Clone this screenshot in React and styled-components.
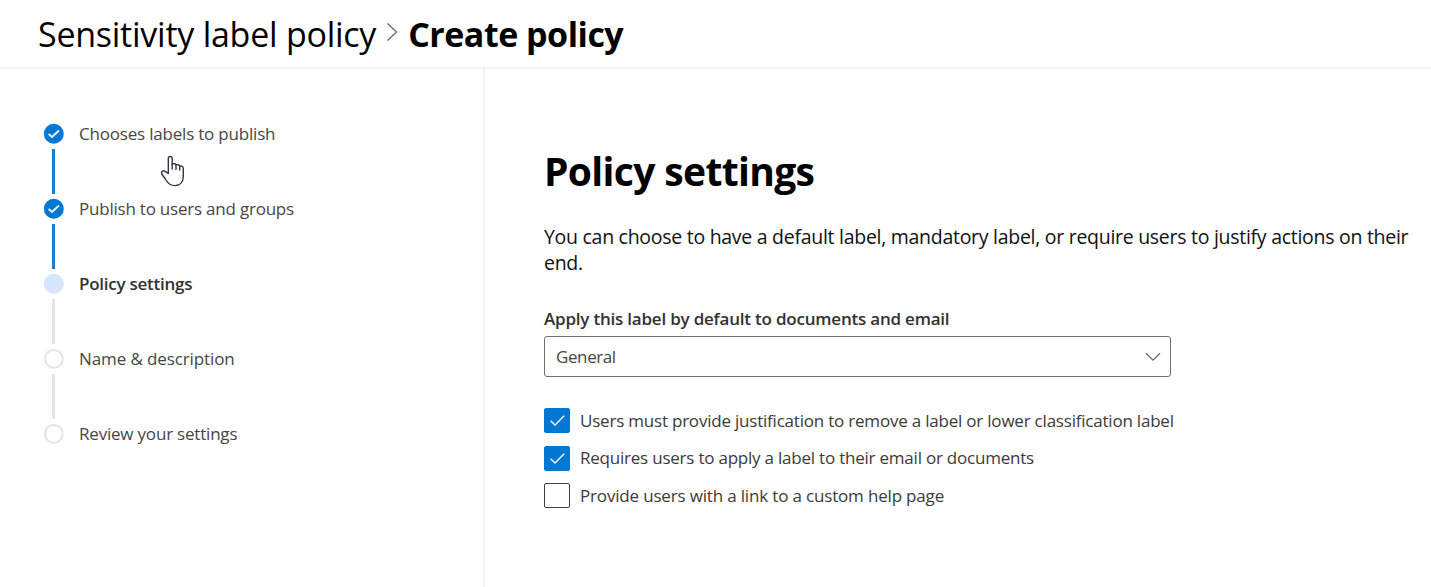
import React from "react";
import styled, { createGlobalStyle } from "styled-components";

const GlobalStyle = createGlobalStyle`
  * { box-sizing: border-box; }
  body {
    margin: 0;
    background: #fff;
    color: #000;
    font-family: "Segoe UI", "Open Sans", "Noto Sans", sans-serif;
    overflow: hidden;
  }
`;

const Page = styled.div`
  display: flex;
  flex-direction: column;
  width: 1431px;
  height: 587px;
  background: #fff;
`;

const Header = styled.header`
  display: flex;
  align-items: center;
  height: 69px;
  flex: none;
  padding-left: 38px;
  border-bottom: 2px solid #f3f3f3;
`;

const Crumb = styled.span`
  font-size: 34px;
  line-height: 46px;
  white-space: nowrap;
  font-weight: ${(p) => (p.$current ? 700 : 400)};
  letter-spacing: ${(p) => p.$track || 0}px;
`;

const CrumbArrow = styled.svg`
  flex: none;
  width: 12px;
  height: 20px;
  margin: 0 10px 4px;
`;

const Body = styled.div`
  display: flex;
  flex: 1;
  min-height: 0;
`;

const Sidebar = styled.nav`
  position: relative;
  flex: none;
  width: 485px;
  padding: 54px 0 0 43px;
  border-right: 2px solid #f3f3f3;
`;

const Steps = styled.ol`
  list-style: none;
  margin: 0;
  padding: 0;
`;

const Step = styled.li`
  display: flex;
  align-items: flex-start;
  height: 75px;
`;

const Rail = styled.div`
  display: flex;
  flex-direction: column;
  align-items: flex-start;
  gap: 4px;
  width: 22px;
`;

const Marker = styled.svg`
  width: 22px;
  height: 22px;
  flex: none;
`;

const Connector = styled.div`
  width: 3px;
  height: 45px;
  margin-left: 9px;
  background: ${(p) => (p.$done ? "#1480d8" : "#e6e3e6")};
`;

const StepLabel = styled.span`
  margin-left: 14px;
  font-size: 17px;
  line-height: 22px;
  white-space: nowrap;
  color: ${(p) => (p.$current ? "#323130" : "#484644")};
  font-weight: ${(p) => (p.$current ? 600 : 400)};
  letter-spacing: ${(p) => p.$track || 0}px;
`;

const Hand = styled.svg`
  position: absolute;
  left: 160px;
  top: 86px;
  width: 26px;
  height: 33px;
`;

const Main = styled.main`
  flex: 1;
  min-width: 0;
  padding: 74px 0 0 59px;
`;

const Title = styled.h1`
  margin: 0;
  font-size: 39px;
  line-height: 56px;
  font-weight: 700;
  white-space: nowrap;
  letter-spacing: ${(p) => p.$track || 0}px;
`;

const Intro = styled.p`
  margin: 25px 0 0;
  font-size: 19.5px;
  line-height: 26px;
  white-space: nowrap;
  color: #111;
  letter-spacing: ${(p) => p.$track || 0}px;
`;

const FieldLabel = styled.label`
  display: block;
  width: max-content;
  margin-top: 32px;
  font-size: 17px;
  line-height: 22px;
  font-weight: 600;
  color: #323130;
  white-space: nowrap;
  letter-spacing: ${(p) => p.$track || 0}px;
`;

const Select = styled.div`
  display: flex;
  align-items: center;
  justify-content: space-between;
  width: 627px;
  height: 41px;
  margin-top: 6px;
  padding: 0 9px 0 11px;
  border: 1.5px solid #706e6d;
  border-radius: 3px;
  color: #484644;
  font-size: 17px;
  line-height: 22px;
`;

const SelectValue = styled.span`
  letter-spacing: ${(p) => p.$track || 0}px;
`;

const Chevron = styled.svg`
  width: 16px;
  height: 10px;
`;

const Options = styled.div`
  display: flex;
  flex-direction: column;
  gap: 12.5px;
  margin-top: 31px;
`;

const Option = styled.div`
  display: flex;
  align-items: center;
  height: 25px;
`;

const Box = styled.span`
  display: flex;
  align-items: center;
  justify-content: center;
  flex: none;
  width: 26px;
  height: 25px;
  border-radius: 2px;
  border: 1.5px solid ${(p) => (p.$on ? "#0078d4" : "#403e3d")};
  background: ${(p) => (p.$on ? "#0078d4" : "#fff")};
`;

const OptionText = styled.span`
  margin-left: 10px;
  font-size: 17px;
  line-height: 22px;
  color: #3b3a39;
  white-space: nowrap;
  letter-spacing: ${(p) => p.$track || 0}px;
`;

const steps = [
  { text: "Chooses labels to publish", state: "done", track: -0.2 },
  { text: "Publish to users and groups", state: "done", track: -0.22 },
  { text: "Policy settings", state: "current", track: -0.25 },
  { text: "Name & description", state: "todo", track: -0.11 },
  { text: "Review your settings", state: "todo", track: -0.2 },
];

const options = [
  { text: "Users must provide justification to remove a label or lower classification label", on: true, track: -0.21 },
  { text: "Requires users to apply a label to their email or documents", on: true, track: -0.22 },
  { text: "Provide users with a link to a custom help page", on: false, track: -0.17 },
];

function StepMarker({ state }) {
  return (
    <Marker viewBox="0 0 22 22" fill="none">
      {state === "done" && (
        <>
          <circle cx="10.8" cy="10.8" r="10" fill="#0078d4" />
          <path d="M5.7 11 L9 14 L16 7.4" stroke="#e8f2fc" strokeWidth="2" />
        </>
      )}
      {state === "current" && <circle cx="10.8" cy="10.8" r="10" fill="#d6e6ff" />}
      {state === "todo" && <circle cx="10.8" cy="10.8" r="8.9" stroke="#e6e3e6" strokeWidth="2" />}
    </Marker>
  );
}

export default function App() {
  return (
    <Page>
      <GlobalStyle />
      <Header>
        <Crumb $track={-0.25}>Sensitivity label policy</Crumb>
        <CrumbArrow viewBox="0 0 12 20" fill="none">
          <path d="M1.5 1.5 L10.5 10 L1.5 18.5" stroke="#6b6966" strokeWidth="1.3" />
        </CrumbArrow>
        <Crumb $current $track={-0.5}>Create policy</Crumb>
      </Header>
      <Body>
        <Sidebar>
          <Steps>
            {steps.map((s, i) => (
              <Step key={s.text}>
                <Rail>
                  <StepMarker state={s.state} />
                  {i < steps.length - 1 && <Connector $done={s.state === "done"} />}
                </Rail>
                <StepLabel $current={s.state === "current"} $track={s.track}>{s.text}</StepLabel>
              </Step>
            ))}
          </Steps>
          <Hand viewBox="0 0 26 33" fill="#fff" stroke="#33334a" strokeWidth="1.4" strokeLinejoin="round" strokeLinecap="round">
            <path d="M8.3 18.5 V3.6 C8.3 .8 12.2 .8 12.2 3.6 V9.2 C13.4 8.2 15.6 8.6 16 10 C17.4 9.2 19.4 9.8 19.7 11.2 C21.4 10.6 23.2 11.4 23.3 13.3 V21.5 C23.3 27.5 19.5 30.6 14.8 30.6 C9.6 30.6 7.6 27.8 6 25 C4.6 22.4 2.4 20.4 1.6 18.6 C.8 16.2 3.6 15.2 5.2 16.3 L8.3 18.5 Z" />
            <path d="M12.2 9 V14 M16 10 V14.6 M19.7 11.2 V15" fill="none" />
          </Hand>
        </Sidebar>
        <Main>
          <Title $track={-0.65}>Policy settings</Title>
          <Intro $track={-0.28}>
            You can choose to have a default label, mandatory label, or require users to justify actions on their
            <br />
            end.
          </Intro>
          <FieldLabel $track={-0.21}>Apply this label by default to documents and email</FieldLabel>
          <Select>
            <SelectValue $track={-0.4}>General</SelectValue>
            <Chevron viewBox="0 0 16 10" fill="none">
              <path d="M1 1.2 L8 8.2 L15 1.2" stroke="#6b6966" strokeWidth="1.3" />
            </Chevron>
          </Select>
          <Options>
            {options.map((o) => (
              <Option key={o.text}>
                <Box $on={o.on}>
                  {o.on && (
                    <svg width="17" height="13" viewBox="0 0 17 13" fill="none">
                      <path d="M1.6 6.8 L6 11 L15.2 1.8" stroke="#fff" strokeWidth="1.3" />
                    </svg>
                  )}
                </Box>
                <OptionText $track={o.track}>{o.text}</OptionText>
              </Option>
            ))}
          </Options>
        </Main>
      </Body>
    </Page>
  );
}
